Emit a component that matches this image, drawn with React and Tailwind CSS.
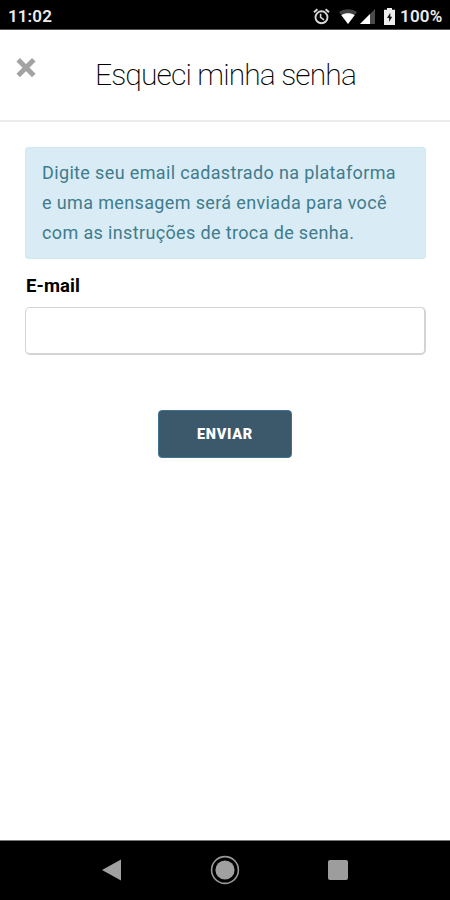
import { useState } from "react";

function StatusBar() {
  return (
    <div className="flex h-[30px] shrink-0 items-center border-b border-[#555] bg-black pl-2 pr-[7px] pt-[3px] text-[17px] font-semibold leading-none text-[#ececec]">
      <span className="grow tracking-[0.1px]">11:02</span>
      <svg className="mr-[9px] h-[17px] w-[17px]" viewBox="0 0 17 17" fill="none" stroke="#d8d8d8">
        <circle cx="8.5" cy="9.3" r="6" strokeWidth="1.9" />
        <path d="M1 4.2 4.4 1.2M16 4.2 12.6 1.2" strokeWidth="2" />
        <path d="M7.6 5.8v3.6l3.4 2.5" strokeWidth="1.6" />
      </svg>
      <svg className="mr-[3px] h-[15px] w-[18px]" viewBox="0 0 18 15">
        <path d="M0 3.2C5-.6 13-.6 18 3.2L9 15Z" fill="#424242" />
        <path d="M2.4 6.2C6 3.6 12 3.6 15.6 6.2L9 15Z" fill="#fff" />
      </svg>
      <svg className="mr-[9px] h-[15px] w-[15px]" viewBox="0 0 15 15">
        <path d="M15 0v15H0Z" fill="#4a4a4a" />
        <path d="M10 5V15H0Z" fill="#fff" />
      </svg>
      <svg className="mr-[5px] h-[17px] w-[11px]" viewBox="0 0 11 17">
        <path d="M3 0h5v1.8h3V17H0V1.8h3Z" fill="#eee" />
        <path d="M6.3 4.8 3 10h2.1v4L8.2 8.8H6.3Z" fill="#111" />
      </svg>
      <span className="w-[43px] whitespace-nowrap tracking-[0.2px]">100%</span>
    </div>
  );
}

function Header() {
  return (
    <header className="flex h-[92px] shrink-0 items-start border-b-2 border-[#ececec] pl-4">
      <button type="button" aria-label="Fechar" className="mt-7">
        <svg className="h-5 w-5" viewBox="0 0 20 20" stroke="#a3a3a3" strokeWidth="5">
          <path d="M2.2 1.8 17.8 17.4M17.8 1.8 2.2 17.4" />
        </svg>
      </button>
      <h1 className="ml-[59px] mt-[27px] whitespace-nowrap text-[30px] font-extralight leading-9 tracking-[-0.88px] text-black">
        Esqueci minha senha
      </h1>
    </header>
  );
}

function NavBar() {
  return (
    <div className="flex h-[60px] shrink-0 items-center justify-between border-t border-[#777] bg-black px-[102px] pb-px">
      <svg className="h-[22px] w-[20px]" viewBox="0 0 20 22">
        <path d="M0 11 19 .5v21Z" fill="#a0a0a0" />
      </svg>
      <svg className="h-[30px] w-[30px]" viewBox="0 0 30 30">
        <circle cx="15" cy="15" r="13.4" fill="none" stroke="#999" strokeWidth="1.6" />
        <circle cx="15" cy="15" r="9.6" fill="#a0a0a0" />
      </svg>
      <span className="h-5 w-5 rounded-xs bg-[#9d9d9d]"></span>
    </div>
  );
}

export default function App() {
  const [email, setEmail] = useState("");

  return (
    <div className="flex h-[900px] w-[450px] flex-col bg-white font-[Roboto,sans-serif]">
      <StatusBar />
      <Header />
      <main className="flex grow flex-col px-[25px] pt-[25px]">
        <p className="h-[112px] w-[401px] whitespace-nowrap rounded-[3px] border border-[#d2e8f2] bg-[#d9ebf5] pl-4 pt-[10px] text-[18px] leading-[30px] tracking-[0.36px] text-[#3f7c8c]">
          Digite seu email cadastrado na plataforma
          <br />
          e uma mensagem será enviada para você
          <br />
          com as instruções de troca de senha.
        </p>
        <label htmlFor="email" className="mt-[15px] pl-px text-[18.5px] font-bold leading-6 tracking-[0.1px] text-black">
          E-mail
        </label>
        <input
          id="email"
          type="email"
          value={email}
          onChange={(e) => setEmail(e.target.value)}
          className="mt-[9px] h-12 w-[401px] rounded-[5px] border border-b-2 border-r-2 border-[#d4d4d4] px-4 outline-none"
        />
        <button
          type="button"
          className="ml-[133px] mt-[55px] h-12 w-[134px] rounded-[4px] border border-[#3f7390] bg-[#3c596c] pt-px text-[14.5px] font-black tracking-[0.7px] text-white"
        >
          ENVIAR
        </button>
      </main>
      <NavBar />
    </div>
  );
}
